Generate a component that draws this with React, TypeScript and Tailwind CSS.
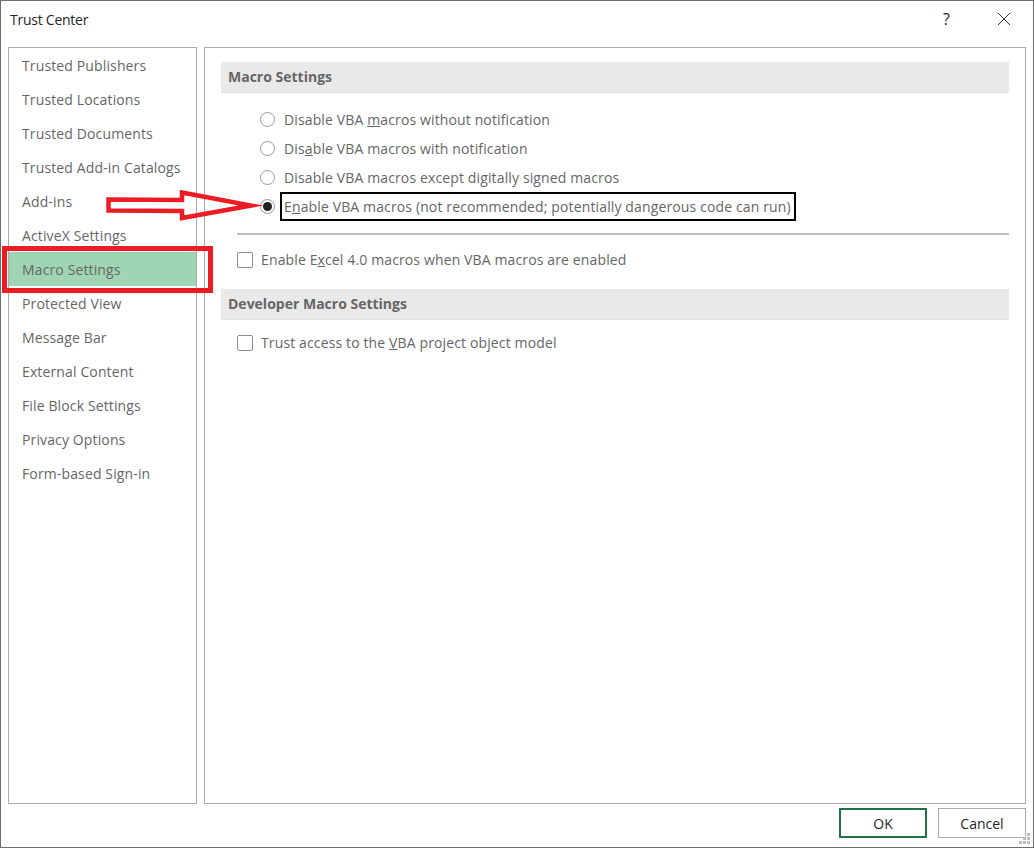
import React from 'react';

const navItems = [
  'Trusted Publishers',
  'Trusted Locations',
  'Trusted Documents',
  'Trusted Add-in Catalogs',
  'Add-ins',
  'ActiveX Settings',
  'Macro Settings',
  'Protected View',
  'Message Bar',
  'External Content',
  'File Block Settings',
  'Privacy Options',
  'Form-based Sign-in',
];

const Radio = ({ checked = false }: { checked?: boolean }) => (
  <span className="flex h-[15px] w-[15px] shrink-0 items-center justify-center rounded-full border border-[#999999] bg-white">
    {checked && <span className="h-[9px] w-[9px] rounded-full bg-[#222222]" />}
  </span>
);

const Checkbox = () => (
  <span className="h-[16px] w-[16px] shrink-0 rounded-[2px] border border-[#8c8c8c] bg-white" />
);

const SectionHeader = ({ children }: { children: React.ReactNode }) => (
  <div className="flex h-[31px] items-center border-b border-[#e2e2e2] bg-[#e9e9e9] pb-[2px] pl-[7px] font-bold tracking-normal text-[#666666]">
    {children}
  </div>
);

const RadioRow = ({ checked, children }: { checked?: boolean; children: React.ReactNode }) => (
  <div className="flex h-[29px] items-center gap-[9px] pl-[39px]">
    <Radio checked={checked} />
    {children}
  </div>
);

export default function App() {
  return (
    <div className="relative flex h-[848px] w-[1034px] flex-col overflow-hidden border border-[#6d6d6d] bg-white font-['Open_Sans','Liberation_Sans',sans-serif] text-[14px] tracking-[0.13px] text-[#666666]">
      {/* Title bar */}
      <div className="mb-[10px] flex h-[36px] shrink-0 items-center justify-between pl-[9px] pr-[22px] text-[#262626]">
        <span className="tracking-[-0.25px]">Trust Center</span>
        <div className="flex items-center gap-[47px]">
          <span className="text-[16px]">?</span>
          <svg width="14" height="14" viewBox="0 0 14 14" fill="none" stroke="#333333" strokeWidth="1">
            <path d="M1 1l12 12M13 1L1 13" />
          </svg>
        </div>
      </div>

      {/* Panels */}
      <div className="ml-[7px] flex h-[757px] shrink-0 gap-[7px]">
        <div className="w-[189px] border border-[#ababab]">
          {navItems.map((item) => (
            <div
              key={item}
              className={`flex h-[34px] items-center pl-[13px] ${item === 'Macro Settings' ? 'bg-[#a0d5b4]' : ''}`}
            >
              {item}
            </div>
          ))}
        </div>

        <div className="w-[822px] border border-[#ababab] pl-[16px] pr-[16px] pt-[14px]">
          <SectionHeader>Macro Settings</SectionHeader>
          <div className="pt-[12px]">
            <RadioRow>
              <span>Disable VBA <u>m</u>acros without notification</span>
            </RadioRow>
            <RadioRow>
              <span>Dis<u>a</u>ble VBA macros with notification</span>
            </RadioRow>
            <RadioRow>
              <span>Disable VBA macros except di<u>g</u>itally signed macros</span>
            </RadioRow>
            <RadioRow checked>
              <span className="relative">
                E<u>n</u>able VBA macros (not recommended; potentially dangerous code can run)
                <span className="absolute -bottom-[4px] -left-[4px] -right-[5px] -top-[4px] border-2 border-black" />
              </span>
            </RadioRow>
          </div>
          <div className="ml-[16px] mt-[12px] h-[2px] bg-[#c0c0c0]" />
          <div className="flex items-center gap-[8px] pl-[16px] pt-[14px]">
            <Checkbox />
            <span>Enable E<u>x</u>cel 4.0 macros when VBA macros are enabled</span>
          </div>
          <div className="mt-[19px]">
            <SectionHeader>Developer Macro Settings</SectionHeader>
          </div>
          <div className="flex items-center gap-[8px] pl-[16px] pt-[12px]">
            <Checkbox />
            <span>Trust access to the <u>V</u>BA project object model</span>
          </div>
        </div>
      </div>

      {/* Buttons */}
      <div className="ml-[838px] mt-[4px] flex gap-[11px] tracking-normal text-[#262626]">
        <button className="h-[30px] w-[88px] border-2 border-[#217346]">OK</button>
        <button className="h-[30px] w-[88px] border border-[#ababab]">Cancel</button>
      </div>

      {/* Resize grip */}
      <svg className="absolute bottom-[2px] right-[2px]" width="12" height="12" viewBox="0 0 12 12" fill="#bdbdbd">
        <rect x="8" y="0" width="3" height="3" />
        <rect x="4" y="4" width="3" height="3" />
        <rect x="8" y="4" width="3" height="3" />
        <rect x="0" y="8" width="3" height="3" />
        <rect x="4" y="8" width="3" height="3" />
        <rect x="8" y="8" width="3" height="3" />
      </svg>

      {/* Red annotations */}
      <div className="absolute left-[1px] top-[245px] h-[47px] w-[211px] border-[5px] border-[#ed1c24]" />
      <svg className="absolute left-[100px] top-[185px]" width="165" height="42" viewBox="0 0 165 42" fill="none" stroke="#ed1c24" strokeWidth="4.5" strokeMiterlimit="10">
        <path d="M7.5 13.5L81 14V6.5L150 19.5L81 32V25L7.5 24.5Z" />
      </svg>
    </div>
  );
}
